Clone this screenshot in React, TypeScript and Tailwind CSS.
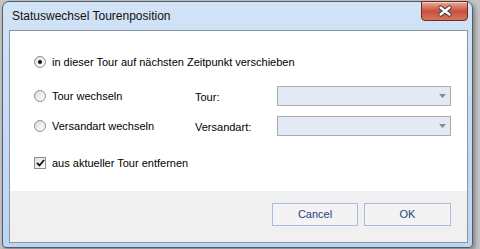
import React from 'react';

function Radio({ checked }: { checked?: boolean }) {
  return (
    <span className="flex h-[12px] w-[12px] shrink-0 items-center justify-center rounded-full border border-[#8e8f8f] bg-gradient-to-br from-[#dcdcdc] to-[#ffffff]">
      {checked && <span className="h-[4px] w-[4px] rounded-full bg-[#111]" />}
    </span>
  );
}

function Combo() {
  return (
    <div className="flex h-[20px] w-[174px] items-center justify-end border border-[#acacac] bg-[#e3eaf6] pr-[4px]">
      <svg width="7" height="4" viewBox="0 0 7 4">
        <path d="M0 0h7L3.5 4z" fill="#8a8a8a" />
      </svg>
    </div>
  );
}

export default function App() {
  return (
    <div className="h-[249px] w-[480px] overflow-hidden bg-[#c4c4c4] pl-[2px] pt-[1px] font-['Liberation_Sans',Arial,sans-serif] text-[11px] text-black">
      <div className="flex h-[247px] w-[471px] flex-col rounded-t-[7px] rounded-b-[4px] border border-[#4f5e6e] bg-gradient-to-b from-[#d2e3f6] via-[#c6dbf2] to-[#bcd5f0] shadow-[2px_2px_4px_rgba(0,0,0,0.35)]">
        {/* title bar */}
        <div className="flex h-[28px] items-start justify-between">
          <span className="pl-[9px] pt-[6px] text-[12px] leading-[16px] text-[#111]">
            Statuswechsel Tourenposition
          </span>
          <div className="-mt-[1px] mr-[4px] flex h-[20px] w-[47px] items-center justify-center rounded-b-[4px] border border-[#6b2a22] bg-gradient-to-b from-[#e9a99a] via-[#c9503a] to-[#d6745c] shadow-[inset_0_1px_0_rgba(255,255,255,0.5)]">
            <svg width="16" height="12" viewBox="0 0 16 12">
              <path d="M3.5 2.5l9 7M12.5 2.5l-9 7" stroke="#3a3a3a" strokeWidth="4.2" strokeLinecap="round" />
              <path d="M3.5 2.5l9 7M12.5 2.5l-9 7" stroke="#ffffff" strokeWidth="2.4" strokeLinecap="round" />
            </svg>
          </div>
        </div>

        {/* client area */}
        <div className="mb-[4px] ml-[6px] mr-[4px] flex flex-1 flex-col border border-[#8796a6]">
          <div className="flex h-[160px] flex-col bg-white pl-[24px] pt-[22px]">
            <div className="flex h-[18px] items-center gap-[6px]">
              <Radio checked />
              <span>in dieser Tour auf nächsten Zeitpunkt verschieben</span>
            </div>

            <div className="mt-[15px] flex h-[20px] items-center">
              <div className="flex w-[161px] items-center gap-[6px]">
                <Radio />
                <span>Tour wechseln</span>
              </div>
              <span className="w-[82px] pt-[2px]">Tour:</span>
              <Combo />
            </div>

            <div className="mt-[10px] flex h-[20px] items-center">
              <div className="flex w-[161px] items-center gap-[6px]">
                <Radio />
                <span>Versandart wechseln</span>
              </div>
              <span className="w-[82px] pt-[2px]">Versandart:</span>
              <Combo />
            </div>

            <div className="mt-[19px] flex h-[16px] items-center gap-[6px]">
              <span className="flex h-[12px] w-[12px] items-center justify-center border border-[#8f8f8f] bg-gradient-to-br from-[#e2e2e2] to-[#fbfbfb]">
                <svg width="9" height="8" viewBox="0 0 9 8">
                  <path d="M1 4l2.5 2.5L8 1" stroke="#111" strokeWidth="1.8" fill="none" />
                </svg>
              </span>
              <span>aus aktueller Tour entfernen</span>
            </div>
          </div>

          <div className="flex flex-1 justify-end gap-[6px] bg-[#f0f0f0] pr-[16px] pt-[12px]">
            <button className="flex h-[23px] w-[86px] items-center justify-center border border-[#a6bedc] bg-[#f3f3f3] text-[#1f3f7f]">
              Cancel
            </button>
            <button className="flex h-[23px] w-[87px] items-center justify-center border border-[#a6bedc] bg-[#f3f3f3] text-[#1f3f7f]">
              OK
            </button>
          </div>
        </div>
      </div>
    </div>
  );
}
